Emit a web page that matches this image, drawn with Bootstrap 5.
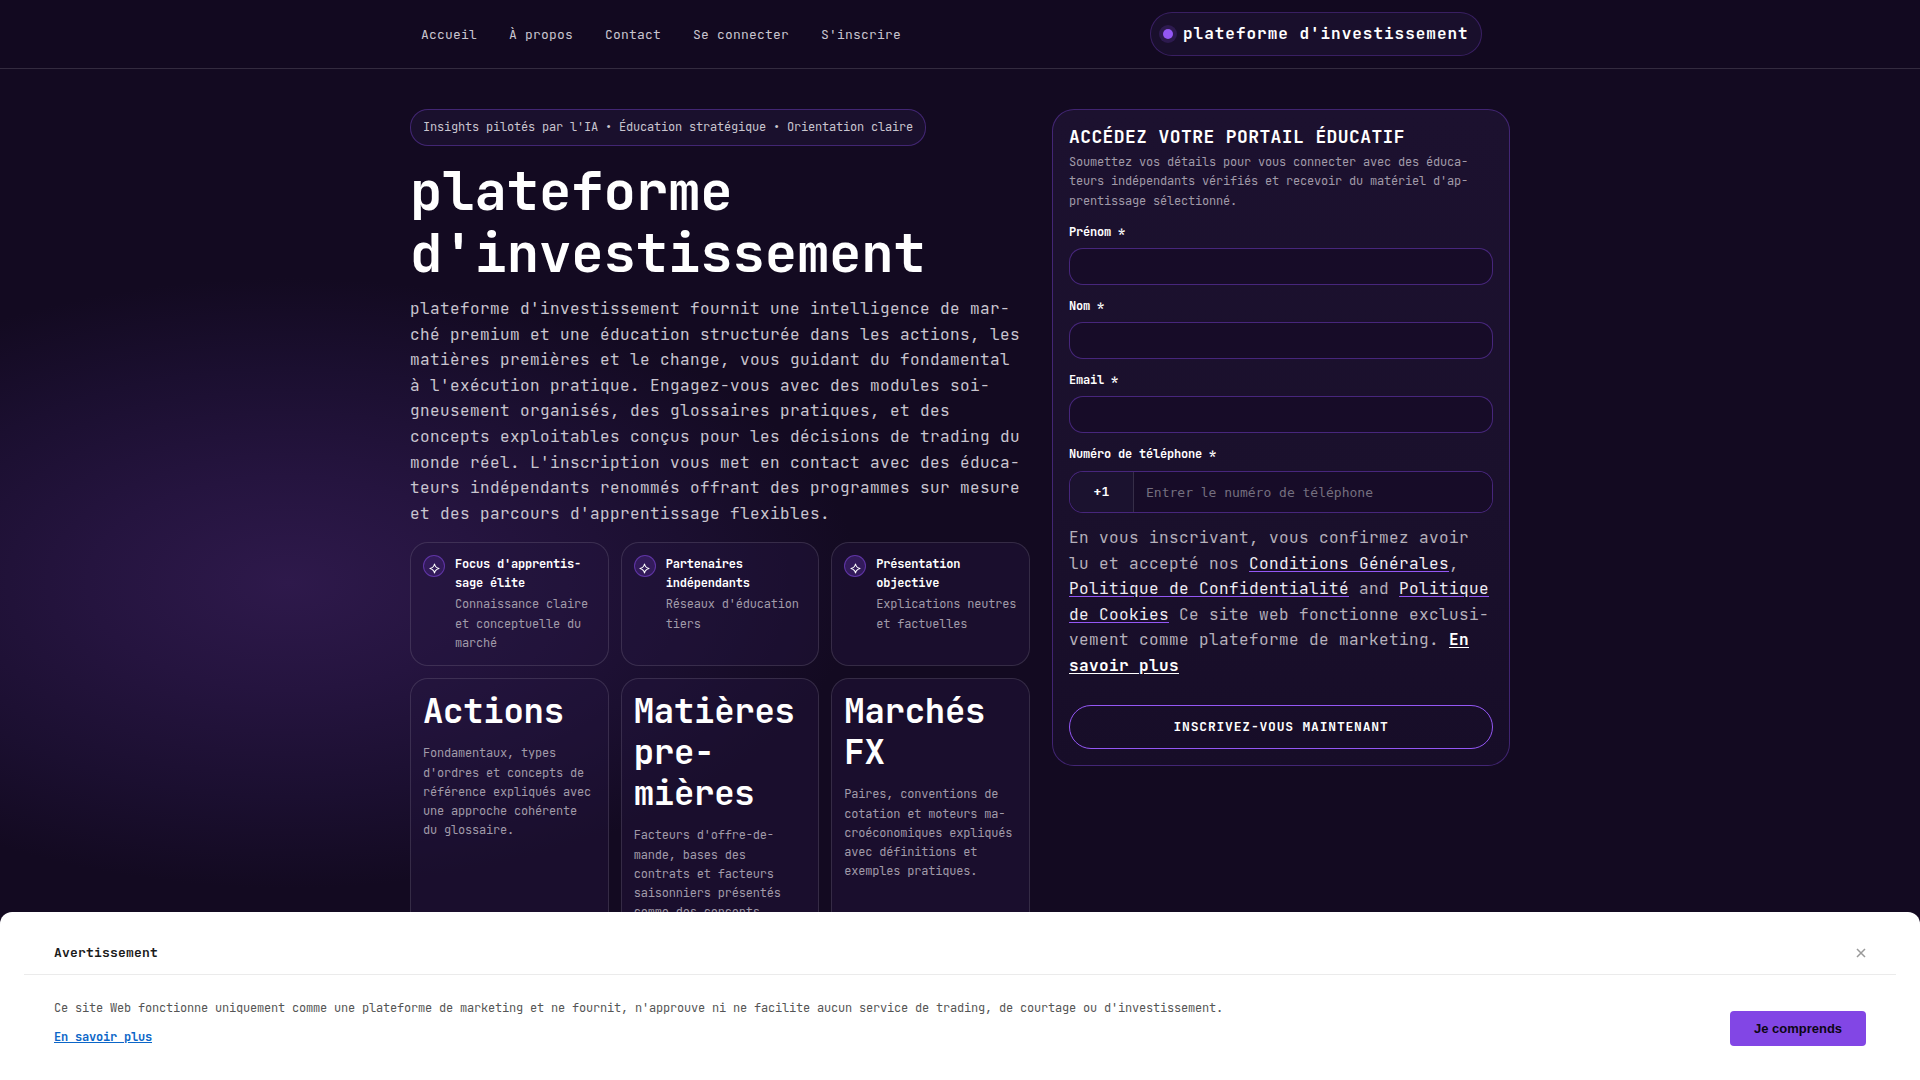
<!DOCTYPE html>
<html lang="fr">
<head>
<meta charset="utf-8">
<meta name="viewport" content="width=device-width, initial-scale=1">
<title>plateforme d'investissement</title>
<link href="https://cdn.jsdelivr.net/npm/bootstrap@5.3.0/dist/css/bootstrap.min.css" rel="stylesheet">
<style>
:root{--line:rgba(255,255,255,.12);--violet:rgba(139,77,240,.36)}
html,body{height:100%}
body{font-family:"JetBrains Mono","DejaVu Sans Mono","Liberation Mono",monospace;font-size:16px;line-height:1.6;letter-spacing:.4px;color:#c9c5cf;overflow:hidden;
 background:radial-gradient(ellipse 570px 305px at 288px 583px,#2e194b 0%,#25143f 35%,#1b0f30 70%,rgba(19,10,33,0) 100%),#130a21}
.t12{font-size:12px;line-height:19.2px;letter-spacing:-.2px}
.shell{width:1100px}
.topbar{height:69px;border-bottom:1px solid rgba(255,255,255,.14);background:#120920}
.topbar .nav{gap:32px;padding:2px 0 0 11px}
.topbar .nav-link{padding:0;font-size:13px;letter-spacing:.2px;color:#c9c5cf}
.brand-pill{height:44px;width:332px;margin-right:28px;padding-left:12px;gap:10px;border:1px solid rgba(139,77,240,.28);border-radius:22px;background:#190f2c;color:#fff;font-weight:700;letter-spacing:.98px;white-space:nowrap}
.brand-dot{width:10px;height:10px;border-radius:50%;background:#9457f5;box-shadow:0 0 0 4px rgba(139,77,240,.18)}
.hero{padding-top:40px;gap:22px}
.hero-left{width:620px}
.hero-right{width:458px}
.eyebrow{height:37px;width:516px;padding-left:12px;border:1px solid var(--violet);border-radius:18px;background:#1a102d;white-space:nowrap}
h1{font-size:54px;line-height:62px;letter-spacing:-.16px;font-weight:700;color:#fff;margin:14px 0 12px}
.tiles{display:grid;grid-template-columns:repeat(3,minmax(0,1fr));gap:12px}
.tile{border:1px solid var(--line);border-radius:18px;padding:12px;background:rgba(35,22,62,.42)}
.tile.feature{height:124px;gap:10px}
.tile.feature b{display:block;margin-bottom:2px;color:#fff;line-height:19px}
.tile.feature .dim{line-height:19.4px}
.tile.topic{height:330px;padding-top:11px}
.dim{color:#a19ba9}
.tile h2{font-size:34px;line-height:41px;letter-spacing:-.28px;color:#fff;font-weight:700;margin-bottom:13px;white-space:nowrap}
.spark{width:22px;height:22px;flex:none;padding-top:5px;border:1px solid rgba(139,77,240,.5);border-radius:50%;background:#331b5b}
.panel{height:657px;padding:16px;border:1px solid var(--violet);border-radius:22px;background:linear-gradient(#1c112f,#1a102c 60%,#170d28)}
.panel h3{font-size:18px;line-height:21.6px;letter-spacing:.4px;color:#fff;font-weight:600;margin-bottom:5px;white-space:nowrap}
.panel .intro{line-height:19.5px}
.panel label{display:block;color:#fff;font-weight:700;margin:12px 0 6px;line-height:19px}
.panel .form-control{height:37px;border:1px solid rgba(139,77,240,.42);border-radius:14px;background:#170c28;color:#fff;box-shadow:none}
.phone{height:42px;border:1px solid rgba(139,77,240,.42);border-radius:14px;background:#170c28;overflow:hidden}
.panel label.phone-label{margin-bottom:7px}
.phone .prefix{width:64px;flex:none;border-right:1px solid var(--line);background:#1b122f;color:#fff;font-weight:700;font-size:13px;letter-spacing:.2px}
.panel .phone .form-control{height:40px;border:0;border-radius:0;padding:0 12px;font-family:"DejaVu Sans Mono",monospace;font-size:13px;letter-spacing:0}
.phone .form-control::placeholder{color:#756f7f}
.legal{margin:12px 0 26.5px;color:#b5b0bb;white-space:nowrap}
.legal a{color:#f1eef5;text-decoration-color:#9457f5;text-underline-offset:1.5px}
.legal a.more{color:#fff;text-decoration-color:#fff;font-weight:700}
.cta{height:44px;border:1px solid #9457f5;border-radius:22px;color:#fff;font-size:13px;font-weight:700;letter-spacing:.8px;background:transparent;padding:0}
.notice{height:168px;background:#fff;border-radius:12px 12px 0 0;padding:0 24px}
.notice-head{height:63px;padding:20px 30px 0;border-bottom:1px solid #ebebeb;color:#1b1b1b;font-size:13px;font-weight:600;letter-spacing:.2px}
.notice-body{padding:24px 30px 0;color:#555}
.notice-body p{margin-bottom:10px}
.notice-body a{color:#0b66c8;font-weight:600}
.ok{width:136px;height:35px;margin-top:12px;padding:0;border-radius:4px;background:#8246e5;color:#0c0714;font:700 13px "Liberation Sans",sans-serif;letter-spacing:0}
</style>
</head>
<body>
<svg width="0" height="0" class="position-absolute"><defs><path id="star" d="M5.500 1Q6.300 4.700 10 5.500Q6.300 6.300 5.500 10Q4.700 6.300 1 5.500Q4.700 4.700 5.500 1Z" fill="none" stroke="#fff" stroke-width="1.100" stroke-linejoin="round"/></defs></svg>
<header class="topbar">
 <div class="shell mx-auto h-100 d-flex align-items-center justify-content-between">
  <nav class="nav">
   <a class="nav-link" href="#">Accueil</a><a class="nav-link" href="#">À propos</a><a class="nav-link" href="#">Contact</a><a class="nav-link" href="#">Se connecter</a><a class="nav-link" href="#">S'inscrire</a>
  </nav>
  <div class="brand-pill d-flex align-items-center"><span class="brand-dot"></span><span>plateforme d'investissement</span></div>
 </div>
</header>
<main class="shell mx-auto hero d-flex align-items-start">
 <section class="hero-left">
  <div class="eyebrow t12 d-flex align-items-center">Insights pilotés par l'IA • Éducation stratégique • Orientation claire</div>
  <h1>plateforme<br>d'investissement</h1>
  <p class="mb-3 text-nowrap">plateforme d'investissement fournit une intelligence de mar-<br>ché premium et une éducation structurée dans les actions, les<br>matières premières et le change, vous guidant du fondamental<br>à l'exécution pratique. Engagez-vous avec des modules soi-<br>gneusement organisés, des glossaires pratiques, et des<br>concepts exploitables conçus pour les décisions de trading du<br>monde réel. L'inscription vous met en contact avec des éduca-<br>teurs indépendants renommés offrant des programmes sur mesure<br>et des parcours d'apprentissage flexibles.</p>
  <div class="tiles t12 text-nowrap">
   <article class="tile feature d-flex">
    <span class="spark d-flex align-items-center justify-content-center"><svg width="11" height="11"><use href="#star"/></svg></span>
    <div><b>Focus d'apprentis-<br>sage élite</b><div class="dim">Connaissance claire<br>et conceptuelle du<br>marché</div></div>
   </article>
   <article class="tile feature d-flex">
    <span class="spark d-flex align-items-center justify-content-center"><svg width="11" height="11"><use href="#star"/></svg></span>
    <div><b>Partenaires<br>indépendants</b><div class="dim">Réseaux d'éducation<br>tiers</div></div>
   </article>
   <article class="tile feature d-flex">
    <span class="spark d-flex align-items-center justify-content-center"><svg width="11" height="11"><use href="#star"/></svg></span>
    <div><b>Présentation<br>objective</b><div class="dim">Explications neutres<br>et factuelles</div></div>
   </article>
   <article class="tile topic"><h2>Actions</h2><p class="dim">Fondamentaux, types<br>d'ordres et concepts de<br>référence expliqués avec<br>une approche cohérente<br>du glossaire.</p></article>
   <article class="tile topic"><h2>Matières<br>pre-<br>mières</h2><p class="dim">Facteurs d'offre-de-<br>mande, bases des<br>contrats et facteurs<br>saisonniers présentés<br>comme des concepts</p></article>
   <article class="tile topic"><h2>Marchés<br>FX</h2><p class="dim">Paires, conventions de<br>cotation et moteurs ma-<br>croéconomiques expliqués<br>avec définitions et<br>exemples pratiques.</p></article>
  </div>
 </section>
 <form class="panel hero-right">
  <h3>ACCÉDEZ VOTRE PORTAIL ÉDUCATIF</h3>
  <p class="t12 intro dim mb-0 text-nowrap">Soumettez vos détails pour vous connecter avec des éduca-<br>teurs indépendants vérifiés et recevoir du matériel d'ap-<br>prentissage sélectionné.</p>
  <label class="t12" for="fn">Prénom *</label><input class="form-control" id="fn">
  <label class="t12" for="ln">Nom *</label><input class="form-control" id="ln">
  <label class="t12" for="em">Email *</label><input class="form-control" id="em">
  <label class="t12 phone-label" for="ph">Numéro de téléphone *</label>
  <div class="phone d-flex"><span class="prefix d-flex align-items-center justify-content-center">+1</span><input class="form-control flex-fill" id="ph" placeholder="Entrer le numéro de téléphone"></div>
  <p class="legal">En vous inscrivant, vous confirmez avoir<br>lu et accepté nos <a href="#">Conditions Générales</a>,<br><a href="#">Politique de Confidentialité</a> and <a href="#">Politique<br>de Cookies</a> Ce site web fonctionne exclusi-<br>vement comme plateforme de marketing. <a class="more" href="#">En<br>savoir plus</a></p>
  <button class="btn cta w-100" type="button">INSCRIVEZ-VOUS MAINTENANT</button>
 </form>
</main>
<aside class="notice fixed-bottom">
 <div class="notice-head d-flex align-items-center justify-content-between"><span>Avertissement</span><svg width="10" height="10" viewBox="0 0 10 10" stroke="#999" stroke-width="1.5"><path d="M1 1L9 9M9 1L1 9"/></svg></div>
 <div class="notice-body t12 d-flex justify-content-between">
  <div><p>Ce site Web fonctionne uniquement comme une plateforme de marketing et ne fournit, n'approuve ni ne facilite aucun service de trading, de courtage ou d'investissement.</p><a href="#">En savoir plus</a></div>
  <button class="btn ok" type="button">Je comprends</button>
 </div>
</aside>
<script src="https://cdn.jsdelivr.net/npm/bootstrap@5.3.0/dist/js/bootstrap.bundle.min.js"></script>
</body>
</html>
